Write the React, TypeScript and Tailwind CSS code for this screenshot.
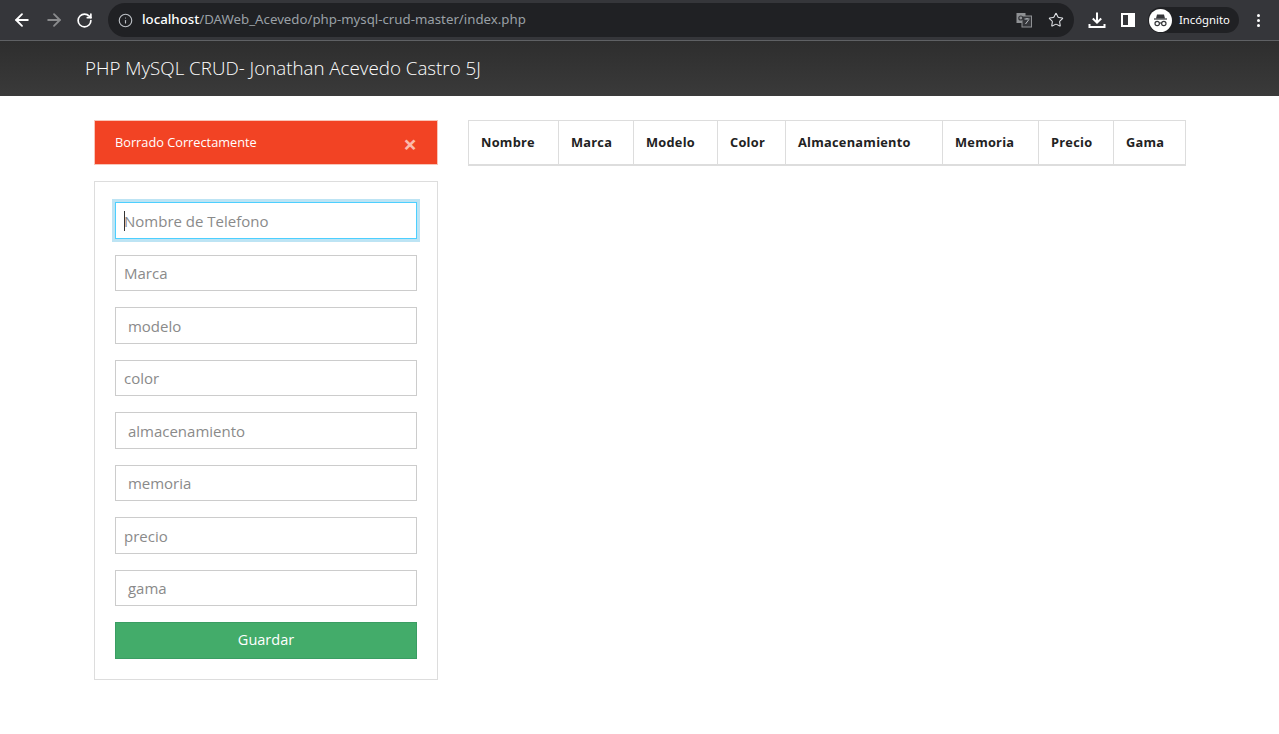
import { ArrowLeft, ArrowRight, RotateCw, Info, Star } from 'lucide-react'

const fields = [
  'Nombre de Telefono',
  'Marca',
  ' modelo',
  'color',
  ' almacenamiento',
  ' memoria',
  'precio',
  ' gama',
]

const columns = [
  { label: 'Nombre', width: 'w-[90px]' },
  { label: 'Marca', width: 'w-[75px]' },
  { label: 'Modelo', width: 'w-[84px]' },
  { label: 'Color', width: 'w-[68px]' },
  { label: 'Almacenamiento', width: 'w-[157px]' },
  { label: 'Memoria', width: 'w-[96px]' },
  { label: 'Precio', width: 'w-[75px]' },
  { label: 'Gama', width: 'w-[71px]' },
]

function BrowserBar() {
  return (
    <div className="flex h-[41px] items-center border-b border-[#5f6164] bg-[#35363a] font-['Noto_Sans',sans-serif]">
      <div className="flex w-[108px] items-center pl-[12px]">
        <ArrowLeft className="h-[20px] w-[20px] text-white" strokeWidth={2.2} />
        <ArrowRight className="ml-[12px] h-[20px] w-[20px] text-[#8a8b8d]" strokeWidth={2.2} />
        <RotateCw className="ml-[12px] h-[17px] w-[17px] text-white" strokeWidth={2.4} />
      </div>
      <div className="flex h-[34px] w-[966px] items-center rounded-full bg-[#202124] pl-[10px] pr-[10px]">
        <Info className="h-[15px] w-[15px] text-[#bdc1c6]" strokeWidth={1.8} />
        <p className="ml-[9px] whitespace-nowrap text-[13.25px] text-[#9aa0a6]">
          <span className="font-medium text-white">localhost</span>/DAWeb_Acevedo/php-mysql-crud-master/index.php
        </p>
        <div className="ml-auto flex items-center gap-[16px]">
          <svg width="16" height="16" viewBox="0 0 16 16">
            <rect x="0.5" y="1" width="9" height="10" fill="#8f9194" />
            <rect x="6" y="4" width="9.5" height="11" fill="#35363a" stroke="#8f9194" />
            <path d="M8.5 7h5M11 6v1M9.5 12l3-4" stroke="#bdc1c6" strokeWidth="1" fill="none" />
            <circle cx="4.8" cy="6" r="2" fill="none" stroke="#35363a" strokeWidth="1.2" />
          </svg>
          <Star className="h-[16px] w-[16px] text-[#dfe1e5]" strokeWidth={1.6} />
        </div>
      </div>
      <div className="ml-[14px] flex items-center">
        <svg width="18" height="18" viewBox="0 0 18 18" fill="none" stroke="white" strokeWidth="2">
          <path d="M9 1.5v10M4.8 7.5 9 11.7l4.2-4.2M1.5 13v3h15v-3" />
        </svg>
        <span className="ml-[15px] flex h-[14px] w-[14px] items-stretch border-2 border-white">
          <span className="ml-auto w-[5px] bg-white" />
        </span>
        <div className="ml-[13px] flex h-[26px] w-[91px] items-center rounded-full bg-[#202124] pl-[1px]">
          <span className="flex h-[23px] w-[23px] items-center justify-center rounded-full bg-white">
            <svg width="17" height="17" viewBox="0 0 17 17">
              <path d="M5 2.5h7l1 4H4z" fill="#35363a" />
              <path d="M2 7h13" stroke="#35363a" strokeWidth="1.2" />
              <circle cx="5.2" cy="11.5" r="2.2" fill="none" stroke="#35363a" strokeWidth="1.2" />
              <circle cx="11.8" cy="11.5" r="2.2" fill="none" stroke="#35363a" strokeWidth="1.2" />
              <path d="M7.4 11h2.2" stroke="#35363a" strokeWidth="1.2" />
            </svg>
          </span>
          <span className="ml-[7px] text-[11.3px] text-white">Incógnito</span>
        </div>
        <span className="ml-[18px] flex flex-col gap-[2px]">
          <span className="h-[3px] w-[3px] rounded-full bg-white" />
          <span className="h-[3px] w-[3px] rounded-full bg-white" />
          <span className="h-[3px] w-[3px] rounded-full bg-white" />
        </span>
      </div>
    </div>
  )
}

export default function App() {
  return (
    <div className="h-[734px] w-[1279px] overflow-hidden bg-white font-['Open_Sans',sans-serif]">
      <BrowserBar />
      <nav className="flex h-[55px] items-center bg-gradient-to-b from-[#2e2e2e] to-[#3a3a3a] pl-[85px]">
        <h1 className="text-[18.75px] font-light text-white">PHP MySQL CRUD- Jonathan Acevedo Castro 5J</h1>
      </nav>
      <main className="flex items-start pl-[94px] pt-[24px]">
        <div className="w-[344px]">
          <div className="flex h-[45px] items-center justify-between border border-[#f9c5b8] bg-[#f24324] pl-[20px] pr-[20px] text-white">
            <span className="text-[12.75px]">Borrado Correctamente</span>
            <span className="mt-[2px] text-[24px] font-bold leading-none text-[#fbb9ab]">×</span>
          </div>
          <form className="mt-[16px] flex h-[499px] flex-col gap-[16px] border border-[#dddddd] px-[20px] pt-[20.25px]">
            {fields.map((placeholder, i) => (
              <div key={placeholder} className="relative">
                <input
                  placeholder={placeholder}
                  className={
                    i === 0
                      ? 'block h-[36.5px] w-full border border-[#4dcfff] px-[8px] text-[15px] shadow-[0_0_0_3px_#bde4f4] outline-none placeholder:text-[#8a8a8a]'
                      : 'block h-[36.5px] w-full border border-[#cccccc] px-[8px] text-[15px] outline-none placeholder:text-[#8a8a8a]'
                  }
                />
                {i === 0 && <span className="absolute left-[9px] top-[9px] h-[20px] w-px bg-[#333333]" />}
              </div>
            ))}
            <button
              type="button"
              className="h-[37px] w-full border border-[#3a9d63] bg-[#43ac6a] pb-[2px] text-[14.5px] font-normal text-white"
            >
              Guardar
            </button>
          </form>
        </div>
        <div className="ml-[30px] flex h-[46px] border border-b-2 border-[#dddddd]">
          {columns.map((col, i) => (
            <div
              key={col.label}
              className={
                col.width +
                ' flex items-center pl-[12px] pt-[1px] text-[12.8px] font-bold tracking-[0.25px] text-[#222222]' +
                (i < columns.length - 1 ? ' border-r border-[#dddddd]' : '')
              }
            >
              {col.label}
            </div>
          ))}
        </div>
      </main>
    </div>
  )
}
